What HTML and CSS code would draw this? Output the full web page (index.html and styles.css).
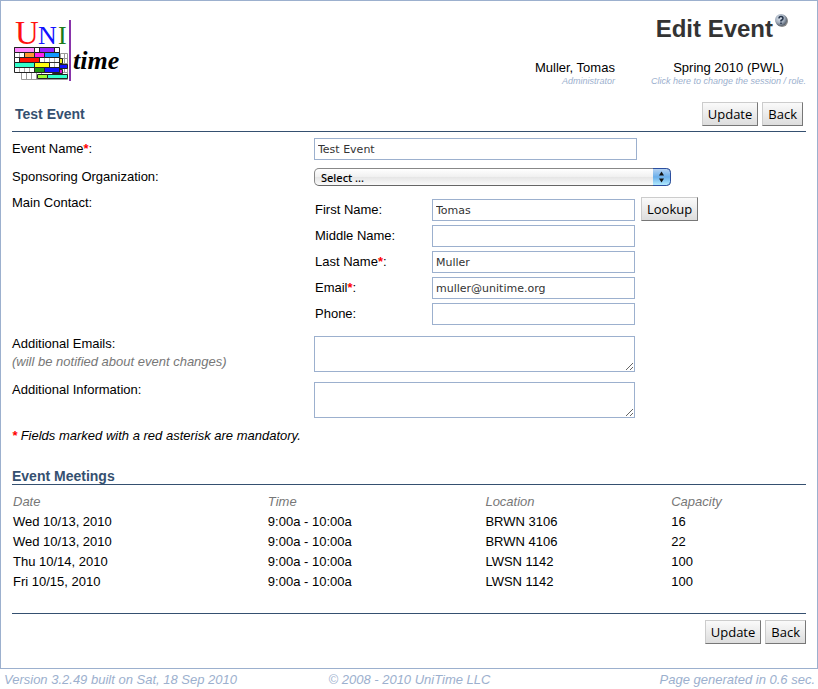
FILE: index.html
```html
<!DOCTYPE html>
<html lang="en">
<head>
<meta charset="utf-8">
<title>Edit Event</title>
<link rel="stylesheet" href="styles.css">
</head>
<body>
<div class="frame">
  <header class="header">
    <svg class="logo" width="108" height="64" viewBox="0 0 108 64" role="img" aria-label="UniTime">
      <g class="logo-uni">
        <text x="1" y="25" font-size="33" fill="#f11">U</text>
        <text x="24" y="25" font-size="26" fill="#11f">N</text>
        <text x="44" y="25" font-size="26" fill="#1a7a1a">I</text>
      </g>
      <g stroke="#999" fill="#fff">
        <path d="M7.500 53.500H53.500V60.500H7.500ZM12.500 53v7M17.500 53v7M22.500 53v7M27.500 53v7M46.500 34.500H53.500V53.500H46.500ZM46 39.500h7M46 44.500h7M50.500 34v19"/>
      </g>
      <g stroke="#222">
        <path fill="#9f3" d="M23.500 55.500h10v4h-10z"/>
        <path fill="#3fc" d="M33.500 55.500h20v4h-20z"/>
        <path fill="#ee2" d="M44.500 39.500h4v5h-4z"/>
        <path fill="#11f" d="M44.500 45.500h9v4h-9z"/>
        <path fill="#d1c" d="M38.500 50.500h10v4h-10z"/>
        <path fill="#fff" d="M.5 28.500h45v25h-45z"/>
      </g>
      <path stroke="#aaa" d="M5.500 34v5M10.500 34v5M30.500 39v5M35.500 39v5M40.500 39v5M5.500 49v4M10.500 49v4M15.500 49v4M35.500 44v5M40.500 44v5"/>
      <path stroke="#333" d="M0 33.500h45M0 38.500h45M0 43.500h45M0 48.500h45M40.500 29v4"/>
      <g stroke="#222">
        <path fill="#f8f" d="M.5 28.500h20v5h-20z"/>
        <path fill="#92f" d="M25.500 28.500h15v5h-15z"/>
        <path fill="#f93" d="M10.500 33.500h10v5h-10z"/>
        <path fill="#f2e" d="M20.500 33.500h10v5h-10z"/>
        <path fill="#19f" d="M30.500 33.500h15v5h-15z"/>
        <path fill="#f10" d="M5.500 38.500h20v5h-20z"/>
        <path fill="#3fc" d="M.5 43.500h20v5h-20z"/>
        <path fill="#ff1" d="M20.500 43.500h15v5h-15z"/>
        <path fill="#291" d="M20.500 48.500h10v5h-10z"/>
        <path fill="#11f" d="M30.500 48.500h15v5h-15z"/>
      </g>
      <path fill="#83a" d="M55 1h2v61h-2z"/>
      <text class="logo-time" x="59" y="50">time</text>
    </svg>
    <div class="header-info">
      <div class="title-row">
        <h1 class="title">Edit Event</h1>
        <svg class="help" width="15" height="15" viewBox="0 0 15 15" role="img" aria-label="Help">
          <defs><radialGradient id="ball" cx=".4" cy=".35" r=".65"><stop offset="0" stop-color="#dde5ef"/><stop offset=".6" stop-color="#a3aebd"/><stop offset="1" stop-color="#56606e"/></radialGradient></defs>
          <circle cx="8" cy="8" r="6" fill="#888"/>
          <circle cx="7" cy="7" r="6" fill="url(#ball)"/>
          <path d="M5 5.500Q5 3.500 7 3.500T9 5.500Q9 6.500 7 7.500V8.500M7 9.500V11" fill="none" stroke="#25344a" stroke-width="1.500"/>
        </svg>
      </div>
      <div class="session-row">
        <div class="user">Muller, Tomas<span class="hint">Administrator</span></div>
        <a class="session" href="#">Spring 2010 (PWL)<span class="hint">Click here to change the session / role.</span></a>
      </div>
    </div>
  </header>

  <form class="form">
    <div class="bar">
      <h2 class="bar-title">Test Event</h2>
      <div class="buttons"><button type="button" class="btn">Update</button><button type="button" class="btn">Back</button></div>
    </div>

    <div class="fields">
      <label class="label" for="name">Event Name<span class="req">*</span>:</label>
      <input class="input wide" id="name" type="text" value="Test Event">

      <label class="label org-label" for="org">Sponsoring Organization:</label>
      <div class="select-wrap">
        <select class="select" id="org"><option>Select ...</option></select>
        <svg class="arrows" width="18" height="18" viewBox="0 0 18 18" aria-hidden="true">
          <defs><linearGradient id="cap" x2="0" y2="1"><stop offset="0" stop-color="#b8d4f2"/><stop offset=".5" stop-color="#6aaeea"/><stop offset="1" stop-color="#b5eeff"/></linearGradient></defs>
          <path d="M0 .5H13.500Q17.500 .5 17.500 4.500V13.500Q17.500 17.500 13.500 17.500H0Z" fill="url(#cap)"/>
          <path d="M0 .5H13.500Q17.500 .5 17.500 4.500V13.500Q17.500 17.500 13.500 17.500H0" fill="none" stroke="#2c4fa0"/>
          <path d="M6 7.500L8.500 3.500L11 7.500ZM6 10.500L8.500 14.500L11 10.500Z" fill="#111"/>
        </svg>
      </div>

      <div class="label">Main Contact:</div>
      <div class="contact">
        <label for="first">First Name:</label>
        <div class="lookup-row"><input class="input" id="first" type="text" value="Tomas"><button type="button" class="btn">Lookup</button></div>
        <label for="middle">Middle Name:</label>
        <input class="input" id="middle" type="text">
        <label for="last">Last Name<span class="req">*</span>:</label>
        <input class="input" id="last" type="text" value="Muller">
        <label for="email">Email<span class="req">*</span>:</label>
        <input class="input" id="email" type="text" value="muller@unitime.org">
        <label for="phone">Phone:</label>
        <input class="input" id="phone" type="text">
      </div>

      <label class="label" for="emails">Additional Emails:<span class="note">(will be notified about event changes)</span></label>
      <textarea class="area" id="emails"></textarea>

      <label class="label" for="info">Additional Information:</label>
      <textarea class="area" id="info"></textarea>
    </div>

    <p class="mandatory"><span class="req">*</span> Fields marked with a red asterisk are mandatory.</p>

    <h2 class="section">Event Meetings</h2>
    <table class="meetings">
      <thead><tr><th class="date">Date</th><th class="time">Time</th><th class="location">Location</th><th>Capacity</th></tr></thead>
      <tbody>
        <tr><td>Wed 10/13, 2010</td><td>9:00a - 10:00a</td><td>BRWN 3106</td><td>16</td></tr>
        <tr><td>Wed 10/13, 2010</td><td>9:00a - 10:00a</td><td>BRWN 4106</td><td>22</td></tr>
        <tr><td>Thu 10/14, 2010</td><td>9:00a - 10:00a</td><td>LWSN 1142</td><td>100</td></tr>
        <tr><td>Fri 10/15, 2010</td><td>9:00a - 10:00a</td><td>LWSN 1142</td><td>100</td></tr>
      </tbody>
    </table>

    <div class="bottom">
      <div class="buttons"><button type="button" class="btn">Update</button><button type="button" class="btn">Back</button></div>
    </div>
  </form>
</div>
<footer class="footer">
  <span>Version 3.2.49 built on Sat, 18 Sep 2010</span>
  <span class="copyright">© 2008 - 2010 UniTime LLC</span>
  <span class="generated">Page generated in 0.6 sec.</span>
</footer>
</body>
</html>
```
FILE: styles.css
```css
* { box-sizing: border-box; }

body {
  margin: 0;
  background: #fff;
  color: #000;
  font: 13px/18px "Liberation Sans", Arial, sans-serif;
}

h1, h2, p { margin: 0; }

.frame {
  border: 1px solid #9cb0ce;
  padding: 0 11px 24px;
}

.header {
  display: flex;
  justify-content: space-between;
  padding: 18px 0 0 2px;
}

.logo { display: block; overflow: visible; }
.logo-uni { font-family: "Liberation Serif", serif; }
.logo-time { font: italic bold 26px "Liberation Serif", serif; }

.title-row {
  display: flex;
  justify-content: flex-end;
  align-items: flex-start;
  gap: 1px;
  margin: -6px 17px 0 0;
}

.title {
  padding-top: 2px;
  color: #333;
  font-size: 24px;
  line-height: 28px;
}

.session-row {
  display: flex;
  justify-content: flex-end;
  gap: 36px;
  padding-top: 16px;
}

.user { text-align: right; }
.session { color: #000; text-align: center; text-decoration: none; }

.hint {
  display: block;
  color: #9cb0ce;
  font-size: 9px;
  line-height: 9px;
  font-style: italic;
}

.bar {
  display: flex;
  justify-content: space-between;
  align-items: center;
  margin-top: 16px;
  padding: 0 3px 5px;
  border-bottom: 1px solid #355070;
}

.bar-title, .section {
  color: #355070;
  font-size: 14px;
  line-height: 16px;
}

.buttons { display: flex; gap: 4px; }

.btn {
  height: 24px;
  padding: 0 5px;
  border: 1px solid;
  border-color: #ccc #777 #777 #ccc;
  background: linear-gradient(#fafafa, #ddd);
  color: #000;
  font: 500 13px/20px "Open Sans", sans-serif;
}

.fields {
  display: grid;
  grid-template-columns: 302px 1fr;
  justify-items: start;
  padding-top: 6px;
}

.label { padding-top: 2px; }
.req { color: #f00; font-weight: bold; }

.input {
  width: 203px;
  height: 22px;
  padding: 0 3px;
  border: 1px solid #9cb0ce;
  background: #fff;
  color: #333;
  font: 11px "DejaVu Sans", Verdana, sans-serif;
}

.wide { width: 323px; margin-bottom: 8px; }

.org-label { padding-top: 0; }
.select-wrap { position: relative; margin-bottom: 8px; }

.select {
  display: block;
  appearance: none;
  width: 357px;
  height: 18px;
  padding: 0 20px 0 6px;
  border: 1px solid #888;
  border-bottom-color: #666;
  border-radius: 5px;
  background: linear-gradient(#fff, #f0f0f0 50%, #e5e5e5 50%, #fafafa);
  color: #000;
  font: 500 11px "Noto Sans", "Open Sans", sans-serif;
}

.select-wrap + .label { padding-top: 0; }
.arrows { position: absolute; top: 0; right: 0; pointer-events: none; }

.contact {
  display: grid;
  grid-template-columns: 117px auto;
  grid-auto-rows: 22px;
  row-gap: 4px;
  align-items: center;
  padding: 5px 0 10px 1px;
}

.lookup-row { display: flex; align-items: center; gap: 6px; }
.lookup-row .btn { margin-top: -2px; }

.note { display: block; color: #777; font-style: italic; }
.area + .label, .contact + .label { padding-top: 0; }

.area {
  display: block;
  width: 321px;
  height: 36px;
  margin: 1px 0 9px;
  border: 1px solid #9cb0ce;
  font: 11px "DejaVu Sans", Verdana, sans-serif;
}

.mandatory { font-style: italic; }

.section {
  margin-top: 23px;
  border-bottom: 1px solid #355070;
}

.meetings {
  width: 100%;
  margin-top: 7px;
  border-collapse: collapse;
  table-layout: fixed;
}

.meetings th, .meetings td { padding: 1px; text-align: left; }
.meetings th { color: #777; font-weight: normal; font-style: italic; }
.date { width: 32.1%; }
.time { width: 27.4%; }
.location { width: 23.4%; }

.bottom {
  display: flex;
  justify-content: flex-end;
  margin-top: 21px;
  padding-top: 6px;
  border-top: 1px solid #355070;
}

.footer {
  display: grid;
  grid-template-columns: 1fr 1fr 1fr;
  padding: 2px 3px 0 4px;
  color: #9cb0ce;
  font-style: italic;
}

.copyright { text-align: center; }
.generated { text-align: right; }
```
